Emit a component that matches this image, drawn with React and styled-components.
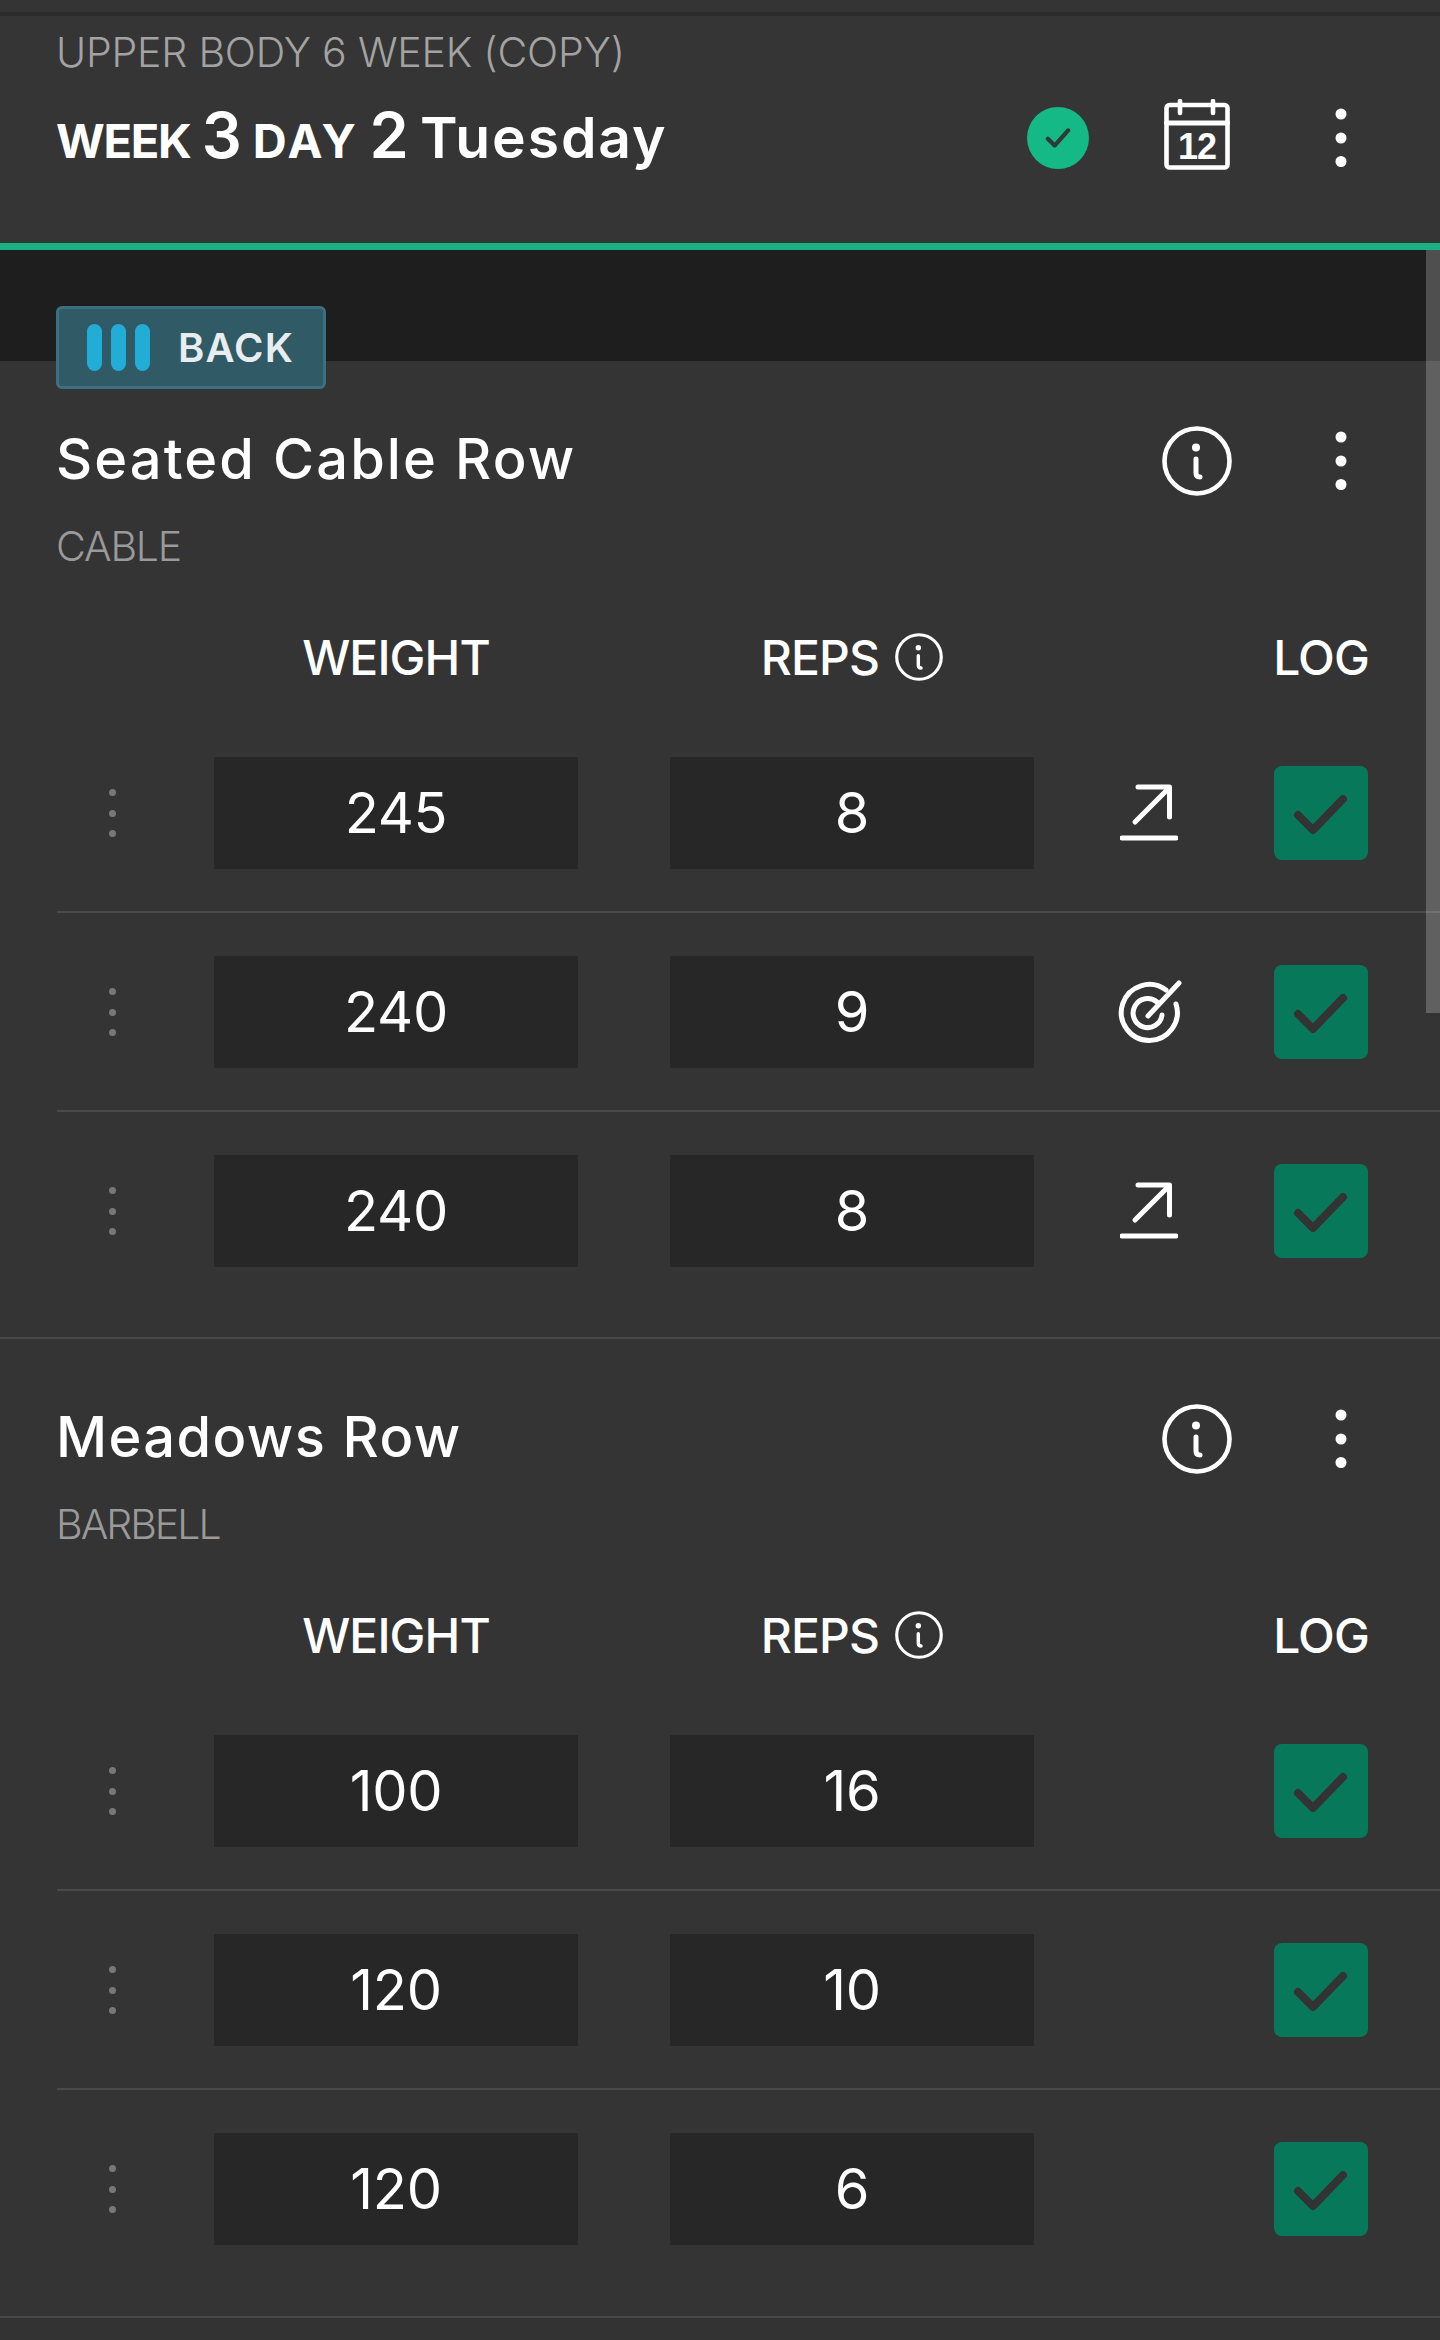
import React from "react";
import styled, { createGlobalStyle } from "styled-components";

const Global = createGlobalStyle`
  html, body { margin: 0; padding: 0; background: #333333; }
  body { font-family: Inter, "Liberation Sans", sans-serif; color: #fff; }
  * { box-sizing: border-box; }
`;
const Page = styled.div`
  position: relative;
  width: 1440px;
  height: 2340px;
  overflow: hidden;
  background: #333333;
`;
const TopStrip = styled.div`
  height: 16px;
  background: #343434;
  border-bottom: 4px solid #2b2b2b;
`;
const Header = styled.header`
  height: 234px;
  background: #353535;
  border-bottom: 7px solid #1bb283;
  padding: 0 56px;
  display: flex;
  align-items: flex-start;
  justify-content: space-between;
`;
const TitleGroup = styled.div`
  display: flex;
  flex-direction: column;
`;
const Program = styled.div`
  margin-top: 9px;
  height: 54px;
  line-height: 54px;
  font-size: 41px;
  font-weight: 300;
  letter-spacing: -0.2px;
  color: #a3a3a3;
  white-space: nowrap;
`;
const Day = styled.div`
  margin-top: 20px;
  height: 72px;
  line-height: 72px;
  font-size: 47px;
  font-weight: 700;
  white-space: nowrap;
`;
const Small = styled.span`
  letter-spacing: ${(p) => p.$ls}px;
`;
const Big = styled.span`
  font-size: 63px;
  font-weight: 600;
`;
const Name = styled.span`
  font-size: 57px;
  font-weight: 600;
  letter-spacing: 1.9px;
`;
const HeaderActions = styled.div`
  display: flex;
  align-items: center;
  height: 72px;
  margin-top: 86px;
  margin-right: 37px;
`;
const DoneBadge = styled.div`
  width: 62px;
  height: 62px;
  border-radius: 50%;
  background: #14b985;
  display: flex;
  align-items: center;
  justify-content: center;
  margin-right: 75px;
`;
const CalendarSlot = styled.div`
  margin-top: -7px;
  margin-right: 105px;
`;
const Band = styled.div`
  height: 111px;
  background: #1e1e1e;
`;
const Scrollbar = styled.div`
  position: absolute;
  z-index: 2;
  top: 250px;
  right: 0;
  width: 14px;
  height: 763px;
  background: rgba(255, 255, 255, 0.22);
`;
const Section = styled.section`
  position: relative;
  padding: 62px 0 ${(p) => p.$pb}px 57px;
  border-bottom: 2px solid #484848;
  background: #343434;
`;
const MuscleTag = styled.div`
  position: absolute;
  left: 56px;
  top: -55px;
  width: 270px;
  height: 83px;
  background: #2f5a66;
  border: 3px solid #3c7080;
  border-radius: 6px;
  display: flex;
  align-items: center;
  padding-left: 28px;
`;
const Bars = styled.div`
  display: flex;
  gap: 9px;
  margin-right: 28px;
`;
const Bar = styled.span`
  width: 15px;
  height: 47px;
  border-radius: 8px;
  background: #22add6;
`;
const TagLabel = styled.span`
  font-size: 40px;
  font-weight: 600;
  letter-spacing: 1.1px;
  color: #e8edf0;
`;
const ExerciseHead = styled.div`
  display: flex;
  align-items: center;
  height: 72px;
  padding-right: 93px;
`;
const ExerciseName = styled.h2`
  margin: -1px 0 0 -1px;
  flex: 1;
  font-size: 56px;
  font-weight: 500;
  letter-spacing: ${(p) => p.$ls}px;
  color: #fff;
  white-space: nowrap;
`;
const InfoSlot = styled.div`
  display: flex;
  margin: 3px 103px 0 0;
`;
const DotsSlot = styled.div`
  display: flex;
  margin-top: 3px;
`;
const Equipment = styled.div`
  margin: 26px 0 0 -1px;
  height: 50px;
  line-height: 50px;
  font-size: 41px;
  font-weight: 300;
  letter-spacing: ${(p) => p.$ls}px;
  color: #9a9a9a;
`;
const RowGrid = styled.div`
  display: grid;
  grid-template-columns: 157px 364px 92px 364px 240px 94px;
  align-items: center;
`;
const ColumnHead = styled(RowGrid)`
  margin-top: 56px;
  height: 60px;
  margin-bottom: 70px;
`;
const ColLabel = styled.div`
  grid-column: ${(p) => p.$col};
  display: flex;
  align-items: center;
  justify-content: center;
  gap: 16px;
  font-size: 48px;
  font-weight: 500;
  letter-spacing: -0.9px;
  white-space: nowrap;
`;
const SetRow = styled(RowGrid)`
  padding-top: ${(p) => (p.$first ? 0 : 43)}px;
  padding-bottom: ${(p) => (p.$last ? 0 : 42)}px;
  border-bottom: ${(p) => (p.$last ? "none" : "2px solid #4a4a4a")};
`;
const Drag = styled.div`
  width: 110px;
  display: flex;
  flex-direction: column;
  align-items: center;
  gap: 13.5px;
`;
const DragDot = styled.span`
  width: 7px;
  height: 7px;
  border-radius: 50%;
  background: #787878;
`;
const ValueBox = styled.div`
  grid-column: ${(p) => p.$col};
  height: 112px;
  background: #272727;
  display: flex;
  align-items: center;
  justify-content: center;
  font-size: 56px;
  font-weight: 400;
  letter-spacing: -0.3px;
  color: #fff;
`;
const MarkSlot = styled.div`
  grid-column: 5;
  display: flex;
  justify-content: center;
  padding-right: 10px;
`;
const LogBox = styled.div`
  grid-column: 6;
  width: 94px;
  height: 94px;
  border-radius: 8px;
  background: #07795a;
  display: flex;
  align-items: center;
  justify-content: center;
`;

const VDots = () => (
  <svg width="12" height="60" viewBox="0 0 12 60" fill="#fff" style={{ display: "block" }}>
    <circle cx="6" cy="6" r="5.5" />
    <circle cx="6" cy="30" r="5.5" />
    <circle cx="6" cy="53.5" r="5.5" />
  </svg>
);
const CheckIcon = () => (
  <svg width="94" height="94" viewBox="0 0 94 94" fill="none" stroke="#333" strokeWidth="8" strokeLinecap="round" strokeLinejoin="round">
    <path d="M24 49 L39 64 L69 33" />
  </svg>
);
const Info = ({ size }) => (
  <svg width={size} height={size} viewBox="0 0 70 70" fill="none" stroke="#fff" strokeLinecap="round" style={{ display: "block" }}>
    <circle cx="35" cy="35" r="32.5" strokeWidth="4.6" />
    <circle cx="34" cy="21.5" r="4" fill="#fff" stroke="none" />
    <path d="M34 33 V47 Q34 51 38 51" strokeWidth="5" />
  </svg>
);
const Calendar = () => (
  <svg width="66" height="71" viewBox="0 0 66 71" fill="none" stroke="#fff" strokeWidth="4.6" strokeLinecap="round" strokeLinejoin="round" style={{ display: "block" }}>
    <rect x="2.5" y="6" width="61" height="62.5" rx="3" />
    <path d="M2.5 24 H63.5" strokeWidth="5" />
    <path d="M16 2 V14 M49 2 V14" />
    <text x="33" y="60" textAnchor="middle" fill="#fff" stroke="none" fontFamily="'Liberation Sans', sans-serif" fontWeight="700" fontSize="36" letterSpacing="-1">12</text>
  </svg>
);
const Trend = () => (
  <svg width="58" height="58" viewBox="0 0 58 58" fill="none" stroke="#fff" strokeWidth="5" strokeLinecap="round" strokeLinejoin="round" style={{ display: "block" }}>
    <path d="M2 54 H56" />
    <path d="M15 38 L49 4" />
    <path d="M18 3 H49.5 V33" />
  </svg>
);
const Target = () => (
  <svg width="66" height="66" viewBox="0 0 66 66" fill="none" stroke="#fff" strokeWidth="5" strokeLinecap="round" style={{ display: "block" }}>
    <path d="M50 11 A 28 28 0 1 0 60 25" />
    <path d="M41 23 A 14.5 14.5 0 1 0 46 36" />
    <path d="M32 37 L63 4" />
  </svg>
);

const DragHandle = () => (
  <Drag>
    <DragDot />
    <DragDot />
    <DragDot />
  </Drag>
);

const Exercise = ({ name, nameLs, equipment, equipLs, sets, tag, pb }) => (
  <Section $pb={pb}>
    {tag && (
      <MuscleTag>
        <Bars>
          <Bar />
          <Bar />
          <Bar />
        </Bars>
        <TagLabel>{tag}</TagLabel>
      </MuscleTag>
    )}
    <ExerciseHead>
      <ExerciseName $ls={nameLs}>{name}</ExerciseName>
      <InfoSlot>
        <Info size={70} />
      </InfoSlot>
      <DotsSlot>
        <VDots />
      </DotsSlot>
    </ExerciseHead>
    <Equipment $ls={equipLs}>{equipment}</Equipment>
    <ColumnHead>
      <ColLabel $col={2}>WEIGHT</ColLabel>
      <ColLabel $col={4}>
        REPS
        <Info size={48} />
      </ColLabel>
      <ColLabel $col={6}>LOG</ColLabel>
    </ColumnHead>
    {sets.map((s, i) => (
      <SetRow key={i} $first={i === 0} $last={i === sets.length - 1}>
        <DragHandle />
        <ValueBox $col={2}>{s.weight}</ValueBox>
        <ValueBox $col={4}>{s.reps}</ValueBox>
        <MarkSlot>
          {s.mark === "trend" && <Trend />}
          {s.mark === "target" && <Target />}
        </MarkSlot>
        <LogBox>
          <CheckIcon />
        </LogBox>
      </SetRow>
    ))}
  </Section>
);

export default function App() {
  return (
    <Page>
      <Global />
      <TopStrip />
      <Header>
        <TitleGroup>
          <Program>UPPER BODY 6 WEEK (COPY)</Program>
          <Day>
            <Small $ls={-1.3}>WEEK</Small> <Big>3</Big> <Small $ls={2.6}>DAY</Small> <Big>2</Big> <Name>Tuesday</Name>
          </Day>
        </TitleGroup>
        <HeaderActions>
          <DoneBadge>
            <svg width="26" height="22" viewBox="0 0 30 26" fill="none" stroke="#2d3a36" strokeWidth="5" strokeLinecap="round" strokeLinejoin="round">
              <path d="M3 14 L11 22 L27 4" />
            </svg>
          </DoneBadge>
          <CalendarSlot>
            <Calendar />
          </CalendarSlot>
          <VDots />
        </HeaderActions>
      </Header>
      <Band />
      <Scrollbar />
      <Exercise
        name="Seated Cable Row"
        nameLs={2.1}
        equipment="CABLE"
        equipLs={-1.2}
        tag="BACK"
        pb={70}
        sets={[
          { weight: 245, reps: 8, mark: "trend" },
          { weight: 240, reps: 9, mark: "target" },
          { weight: 240, reps: 8, mark: "trend" },
        ]}
      />
      <Exercise
        name="Meadows Row"
        nameLs={1.4}
        equipment="BARBELL"
        equipLs={-2}
        pb={71}
        sets={[
          { weight: 100, reps: 16 },
          { weight: 120, reps: 10 },
          { weight: 120, reps: 6 },
        ]}
      />
    </Page>
  );
}
